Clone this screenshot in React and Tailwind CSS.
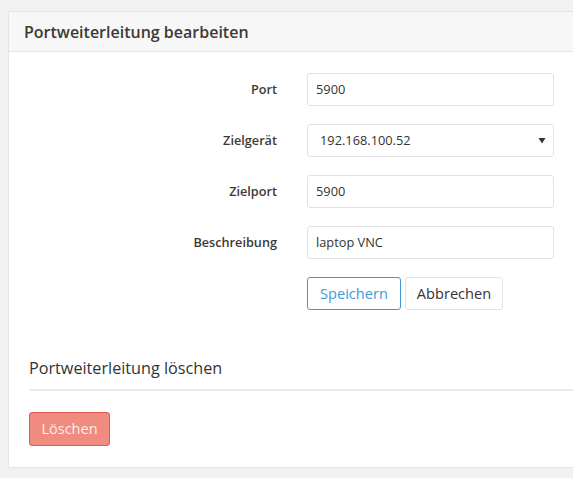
export default function App() {
  const rows = [
    { label: "Port", value: "5900" },
    { label: "Zielgerät", value: "192.168.100.52", select: true },
    { label: "Zielport", value: "5900" },
    { label: "Beschreibung", value: "laptop VNC" },
  ];
  return (
    <div
      className="min-h-[478px] w-[573px] overflow-hidden bg-[#f1f1f1] pt-[11px] pl-[8px] text-[#3d3935]"
      style={{ fontFamily: '"Open Sans", sans-serif' }}
    >
      <div className="w-[600px] h-[457px] border border-[#e4e4e4] bg-white">
        <div className="h-[40px] border-b border-[#e6e6e6] bg-[#f7f7f7] pl-[15px] flex items-center">
          <h1 className="text-[16px] font-semibold leading-none text-[#3d3935]">
            Portweiterleitung bearbeiten
          </h1>
        </div>
        <div className="pl-[20px] pt-[21px]">
          <div className="flex flex-col gap-[18px]">
            {rows.map((r) => (
              <div key={r.label} className="flex items-center">
                <label className="w-[248px] text-right text-[12.7px] font-semibold text-[#3d3935]">
                  {r.label}
                </label>
                <div
                  className={`ml-[30px] flex h-[33px] w-[247px] items-center justify-between rounded-[3px] border border-[#e2e2e2] bg-white text-[12.8px] text-[#333] ${r.select ? "pl-[12px] pr-[6px]" : "pl-[8px]"}`}
                >
                  <span>{r.value}</span>
                  {r.select && (
                    <svg width="8" height="7" viewBox="0 0 8 7" className="mr-[1px]">
                      <path d="M0.5 1h7L4 6.5z" fill="#333" />
                    </svg>
                  )}
                </div>
              </div>
            ))}
            <div className="flex pl-[278px] gap-[4px]">
              <button className="h-[33px] w-[94px] rounded-[3px] border border-[#3d9ad8] bg-white text-[14.6px] text-[#3d9ad8]">
                Speichern
              </button>
              <button className="h-[33px] w-[98px] rounded-[3px] border border-[#e2e2e2] bg-white text-[14.6px] text-[#333]">
                Abbrechen
              </button>
            </div>
          </div>
          <div className="mt-[47px] border-b-2 border-[#ebebeb] pb-[10px]">
            <h2 className="text-[16.2px] font-normal leading-[22px] text-[#333]">
              Portweiterleitung löschen
            </h2>
          </div>
          <button className="mt-[21px] h-[34px] w-[81px] rounded-[3px] border border-[#e25a4e] bg-[#f08b80] text-[14.5px] text-[#fdeceb]">
            Löschen
          </button>
        </div>
      </div>
    </div>
  );
}
